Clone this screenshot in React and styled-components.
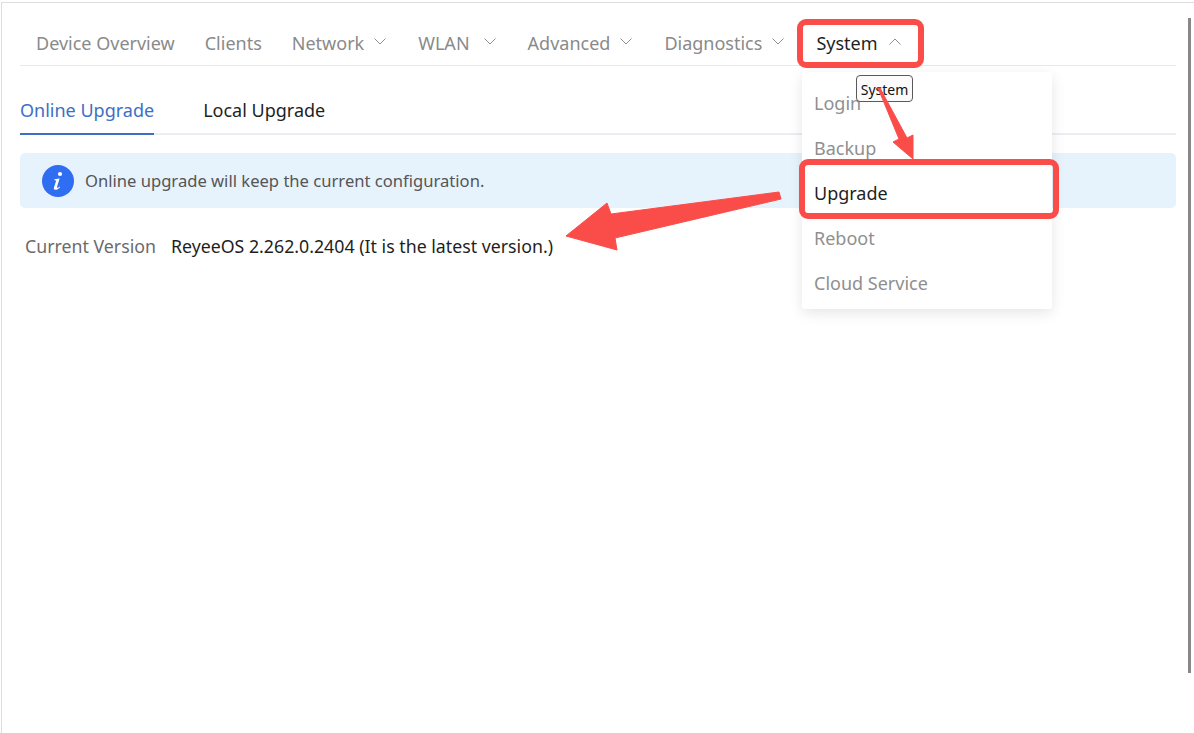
import React from "react";
import styled, { createGlobalStyle } from "styled-components";

const GlobalStyle = createGlobalStyle`
  html, body {
    margin: 0;
    padding: 0;
    background: #fff;
    overflow: hidden;
  }
  body {
    font-family: "Noto Sans", "Open Sans", sans-serif;
  }
`;

const Page = styled.div`
  position: relative;
  width: 1194px;
  height: 733px;
  overflow: hidden;
  background: #fff;
`;

const Frame = styled.div`
  box-sizing: border-box;
  height: 731px;
  margin: 2px 0 0 1px;
  padding: 0 18px 0 18px;
  border-top: 1px solid #dedede;
  border-left: 1px solid #dedede;
`;

const Nav = styled.nav`
  display: flex;
  align-items: center;
  box-sizing: border-box;
  height: 63px;
  padding-top: 18px;
  border-bottom: 1px solid #e8e8ee;
`;

const NavItem = styled.div`
  display: flex;
  align-items: center;
  padding: 0 15px 0 16px;
  margin-right: -1px;
  font-size: 18px;
  color: ${({ $active }) => ($active ? "#1f1f1f" : "#8a8a8a")};
  white-space: nowrap;
`;

const Chevron = styled.svg`
  width: 12px;
  height: 7px;
  margin: 0 2px 4px ${({ $gap }) => $gap || 11}px;
  fill: none;
  stroke: #8f8f8f;
  stroke-width: 1;
  transform: ${({ $up }) => ($up ? "rotate(180deg)" : "none")};
`;

const Tabs = styled.div`
  display: flex;
  gap: 49px;
  height: 69px;
  box-sizing: border-box;
  border-bottom: 2px solid #ecedf3;
`;

const Tab = styled.div`
  display: flex;
  align-items: center;
  height: 69px;
  box-sizing: border-box;
  padding-top: 20px;
  font-size: 18px;
  color: ${({ $active }) => ($active ? "#3d6fc4" : "#1f1f1f")};
  border-bottom: 2px solid ${({ $active }) => ($active ? "#3d6fc4" : "transparent")};
`;

const Banner = styled.div`
  display: flex;
  align-items: center;
  gap: 11px;
  height: 55px;
  margin-top: 18px;
  padding-left: 22px;
  background: #e6f3fd;
  border-radius: 5px;
  font-size: 16.6px;
  color: #555;
`;

const InfoIcon = styled.svg`
  width: 32px;
  height: 32px;
`;

const VersionRow = styled.div`
  display: flex;
  gap: 15px;
  margin-top: 26px;
  padding-left: 5px;
  font-size: 17.75px;
`;

const VersionLabel = styled.span`
  color: #6b6b6b;
`;

const VersionValue = styled.span`
  color: #1f1f1f;
`;

const Dropdown = styled.ul`
  position: absolute;
  left: 802px;
  top: 72px;
  width: 250px;
  margin: 0;
  padding: 8px 0 4px;
  box-sizing: border-box;
  height: 237px;
  list-style: none;
  background: #fff;
  border-radius: 3px;
  box-shadow: 0 4px 14px rgba(0, 0, 0, 0.1);
`;

const DropdownItem = styled.li`
  display: flex;
  align-items: center;
  height: 45px;
  padding-left: 12px;
  font-size: 18px;
  color: ${({ $active }) => ($active ? "#1f1f1f" : "#8f8f8f")};
`;

const Tooltip = styled.div`
  position: absolute;
  left: 856px;
  top: 75px;
  box-sizing: border-box;
  width: 57px;
  height: 27px;
  border: 1px solid #5a5a5a;
  border-radius: 4px;
  background: rgba(250, 250, 250, 0.85);
  font-size: 14px;
  line-height: 27px;
  text-align: center;
  color: #111;
`;

const Highlight = styled.div`
  position: absolute;
  box-sizing: border-box;
  border: 6px solid #fa4d49;
  border-radius: 9px;
`;

const SystemHighlight = styled(Highlight)`
  left: 797px;
  top: 19px;
  width: 127px;
  height: 49px;
`;

const UpgradeHighlight = styled(Highlight)`
  left: 799px;
  top: 159px;
  width: 260px;
  height: 60px;
`;

const Arrows = styled.svg`
  position: absolute;
  left: 0;
  top: 0;
  width: 1194px;
  height: 733px;
  pointer-events: none;
`;

const ScrollThumb = styled.div`
  position: absolute;
  left: 1188px;
  top: 18px;
  width: 3px;
  height: 655px;
  background: #888;
`;

const menus = [
  { label: "Device Overview" },
  { label: "Clients" },
  { label: "Network", arrow: true, gap: 10 },
  { label: "WLAN", arrow: true, gap: 14 },
  { label: "Advanced", arrow: true, gap: 10 },
  { label: "Diagnostics", arrow: true, gap: 10 },
  { label: "System", arrow: true, active: true },
];

const systemItems = ["Login", "Backup", "Upgrade", "Reboot", "Cloud Service"];

const App = () => (
  <Page>
    <GlobalStyle />
    <Frame>
      <Nav>
        {menus.map((m) => (
          <NavItem key={m.label} $active={m.active}>
            {m.label}
            {m.arrow && (
              <Chevron viewBox="0 0 12 7" $up={m.active} $gap={m.gap}>
                <polyline points="0.5,0.5 6,6 11.5,0.5" />
              </Chevron>
            )}
          </NavItem>
        ))}
      </Nav>
      <Tabs>
        <Tab $active>Online Upgrade</Tab>
        <Tab>Local Upgrade</Tab>
      </Tabs>
      <Banner>
        <InfoIcon viewBox="0 0 32 32">
          <circle cx="16" cy="16" r="16" fill="#2f6ef2" />
          <circle cx="18" cy="9" r="2.1" fill="#fff" />
          <path
            d="M12.5 14.2 L17.6 13.4 L15 22 C14.8 23 15.6 23.2 17.8 21.4 L18.2 22 C16.2 24.4 13.6 25.4 12.4 24.6 C11.6 24 11.8 23 12.2 21.8 L14.2 15.6 L12.4 15.2 Z"
            fill="#fff"
          />
        </InfoIcon>
        Online upgrade will keep the current configuration.
      </Banner>
      <VersionRow>
        <VersionLabel>Current Version</VersionLabel>
        <VersionValue>ReyeeOS 2.262.0.2404 (It is the latest version.)</VersionValue>
      </VersionRow>
    </Frame>
    <ScrollThumb />
    <Dropdown>
      {systemItems.map((item) => (
        <DropdownItem key={item} $active={item === "Upgrade"}>
          {item}
        </DropdownItem>
      ))}
    </Dropdown>
    <Tooltip>System</Tooltip>
    <SystemHighlight />
    <UpgradeHighlight />
    <Arrows viewBox="0 0 1194 733">
      <polygon
        points="779,192 781,199 615,238 617,250 566,236 607,203 611,214"
        fill="#fa4d49"
        stroke="#fa4d49"
        strokeWidth="1"
        strokeLinejoin="round"
      />
      <polygon
        points="878,88 880,88 907,138 913,135 913,159 893,142 899,139"
        fill="#fa4d49"
        stroke="#fa4d49"
        strokeWidth="1"
        strokeLinejoin="round"
      />
    </Arrows>
  </Page>
);

export default App;
